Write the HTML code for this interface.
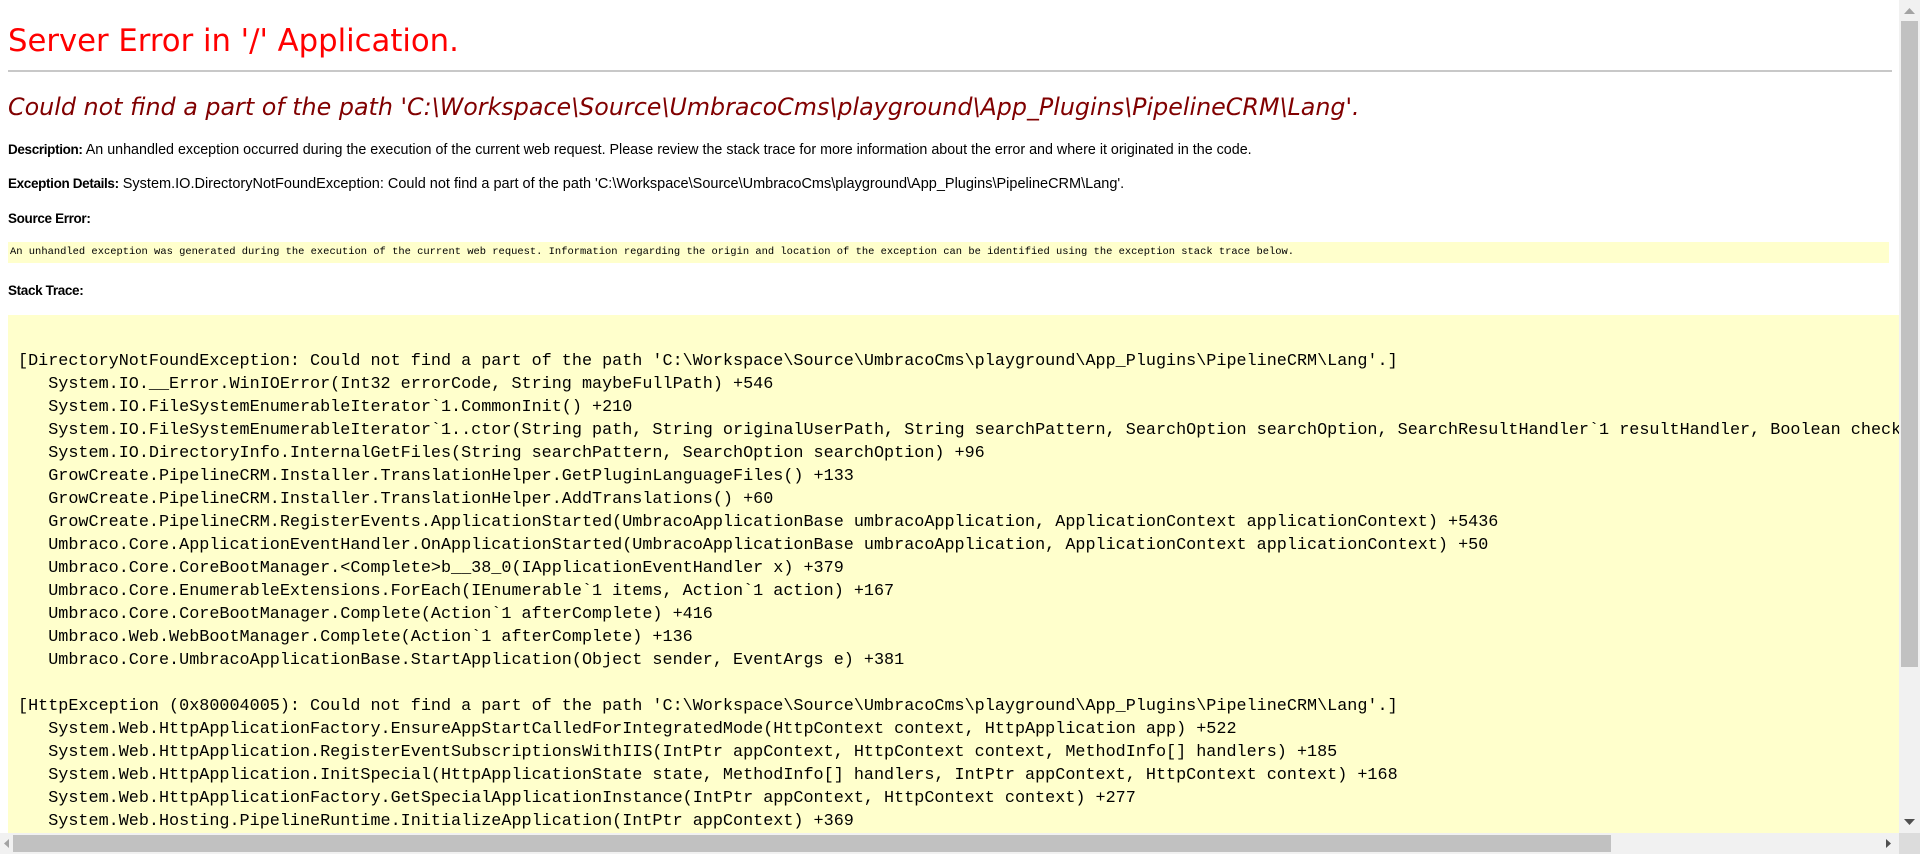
<!DOCTYPE html>
<html><head><meta charset="utf-8"><style>
html,body{margin:0;padding:0;width:1920px;height:854px;overflow:hidden;background:#fff;position:relative}
.a{position:absolute;white-space:nowrap}
h1{position:absolute;margin:0;left:8px;top:27px;font:normal 30.7px/1 "DejaVu Sans",sans-serif;color:#ff0000;white-space:nowrap}
hr{position:absolute;margin:0;left:8px;top:70px;width:1884px;height:0;border:0;border-top:2px solid #c8c8c8}
h2{position:absolute;margin:0;left:8px;top:96px;font:italic 23.8px/1 "DejaVu Sans",sans-serif;color:#800000;white-space:nowrap}
.l{left:8px;font-family:"Liberation Sans",Arial,sans-serif;font-size:14.3px;color:#000;line-height:16px}
.l b{font-size:13.5px;letter-spacing:-0.35px}
.src{left:8px;top:242px;width:1881px;height:21px;background:#ffffcc}
.src span{position:absolute;left:2px;top:4px;font:10.45px/13px "Liberation Mono",monospace;color:#000}
.stk{left:8px;top:315px;width:1891px;height:518px;background:#ffffcc;overflow:hidden}
.stk pre{position:absolute;left:10px;top:35px;margin:0;font:16.8px/23px "Liberation Mono",monospace;color:#000}
.vs{left:1899px;top:0;width:21px;height:833px;background:#f1f1f1}
.vt{left:1901px;top:21px;width:17px;height:646px;background:#c1c1c1}
.hs{left:0;top:833px;width:1899px;height:21px;background:#f1f1f1}
.ht{left:13px;top:835px;width:1598px;height:17px;background:#c1c1c1}
.cor{left:1899px;top:833px;width:21px;height:21px;background:#dcdcdc}
</style></head><body>
<h1>Server Error in '/' Application.</h1>
<hr>
<h2>Could not find a part of the path 'C:\Workspace\Source\UmbracoCms\playground\App_Plugins\PipelineCRM\Lang'.</h2>
<div class="a l" style="top:142px"><b>Description:</b> An unhandled exception occurred during the execution of the current web request. Please review the stack trace for more information about the error and where it originated in the code.</div>
<div class="a l" style="top:176px;font-size:14.5px"><b>Exception Details:</b> System.IO.DirectoryNotFoundException: Could not find a part of the path 'C:\Workspace\Source\UmbracoCms\playground\App_Plugins\PipelineCRM\Lang'.</div>
<div class="a l" style="top:211px"><b>Source Error:</b></div>
<div class="a src"><span>An unhandled exception was generated during the execution of the current web request. Information regarding the origin and location of the exception can be identified using the exception stack trace below.</span></div>
<div class="a l" style="top:283px"><b>Stack Trace:</b></div>
<div class="a stk"><pre>[DirectoryNotFoundException: Could not find a part of the path 'C:\Workspace\Source\UmbracoCms\playground\App_Plugins\PipelineCRM\Lang'.]
   System.IO.__Error.WinIOError(Int32 errorCode, String maybeFullPath) +546
   System.IO.FileSystemEnumerableIterator`1.CommonInit() +210
   System.IO.FileSystemEnumerableIterator`1..ctor(String path, String originalUserPath, String searchPattern, SearchOption searchOption, SearchResultHandler`1 resultHandler, Boolean checkHost) +365
   System.IO.DirectoryInfo.InternalGetFiles(String searchPattern, SearchOption searchOption) +96
   GrowCreate.PipelineCRM.Installer.TranslationHelper.GetPluginLanguageFiles() +133
   GrowCreate.PipelineCRM.Installer.TranslationHelper.AddTranslations() +60
   GrowCreate.PipelineCRM.RegisterEvents.ApplicationStarted(UmbracoApplicationBase umbracoApplication, ApplicationContext applicationContext) +5436
   Umbraco.Core.ApplicationEventHandler.OnApplicationStarted(UmbracoApplicationBase umbracoApplication, ApplicationContext applicationContext) +50
   Umbraco.Core.CoreBootManager.&lt;Complete&gt;b__38_0(IApplicationEventHandler x) +379
   Umbraco.Core.EnumerableExtensions.ForEach(IEnumerable`1 items, Action`1 action) +167
   Umbraco.Core.CoreBootManager.Complete(Action`1 afterComplete) +416
   Umbraco.Web.WebBootManager.Complete(Action`1 afterComplete) +136
   Umbraco.Core.UmbracoApplicationBase.StartApplication(Object sender, EventArgs e) +381

[HttpException (0x80004005): Could not find a part of the path 'C:\Workspace\Source\UmbracoCms\playground\App_Plugins\PipelineCRM\Lang'.]
   System.Web.HttpApplicationFactory.EnsureAppStartCalledForIntegratedMode(HttpContext context, HttpApplication app) +522
   System.Web.HttpApplication.RegisterEventSubscriptionsWithIIS(IntPtr appContext, HttpContext context, MethodInfo[] handlers) +185
   System.Web.HttpApplication.InitSpecial(HttpApplicationState state, MethodInfo[] handlers, IntPtr appContext, HttpContext context) +168
   System.Web.HttpApplicationFactory.GetSpecialApplicationInstance(IntPtr appContext, HttpContext context) +277
   System.Web.Hosting.PipelineRuntime.InitializeApplication(IntPtr appContext) +369
</pre></div>
<div class="a vs"></div>
<div class="a vt"></div>
<svg class="a" style="left:1899px;top:0" width="21" height="21"><path d="M5 14 L10.5 8 L16 14Z" fill="#a3a3a3"/></svg>
<svg class="a" style="left:1899px;top:812px" width="21" height="21"><path d="M5 7 L10.5 13 L16 7Z" fill="#505050"/></svg>
<div class="a hs"></div>
<div class="a ht"></div>
<svg class="a" style="left:0;top:833px" width="13" height="21"><path d="M9 6 L4 10.5 L9 15Z" fill="#a3a3a3"/></svg>
<svg class="a" style="left:1878px;top:833px" width="21" height="21"><path d="M8 6 L13 10.5 L8 15Z" fill="#505050"/></svg>
<div class="a cor"></div>
</body></html>
